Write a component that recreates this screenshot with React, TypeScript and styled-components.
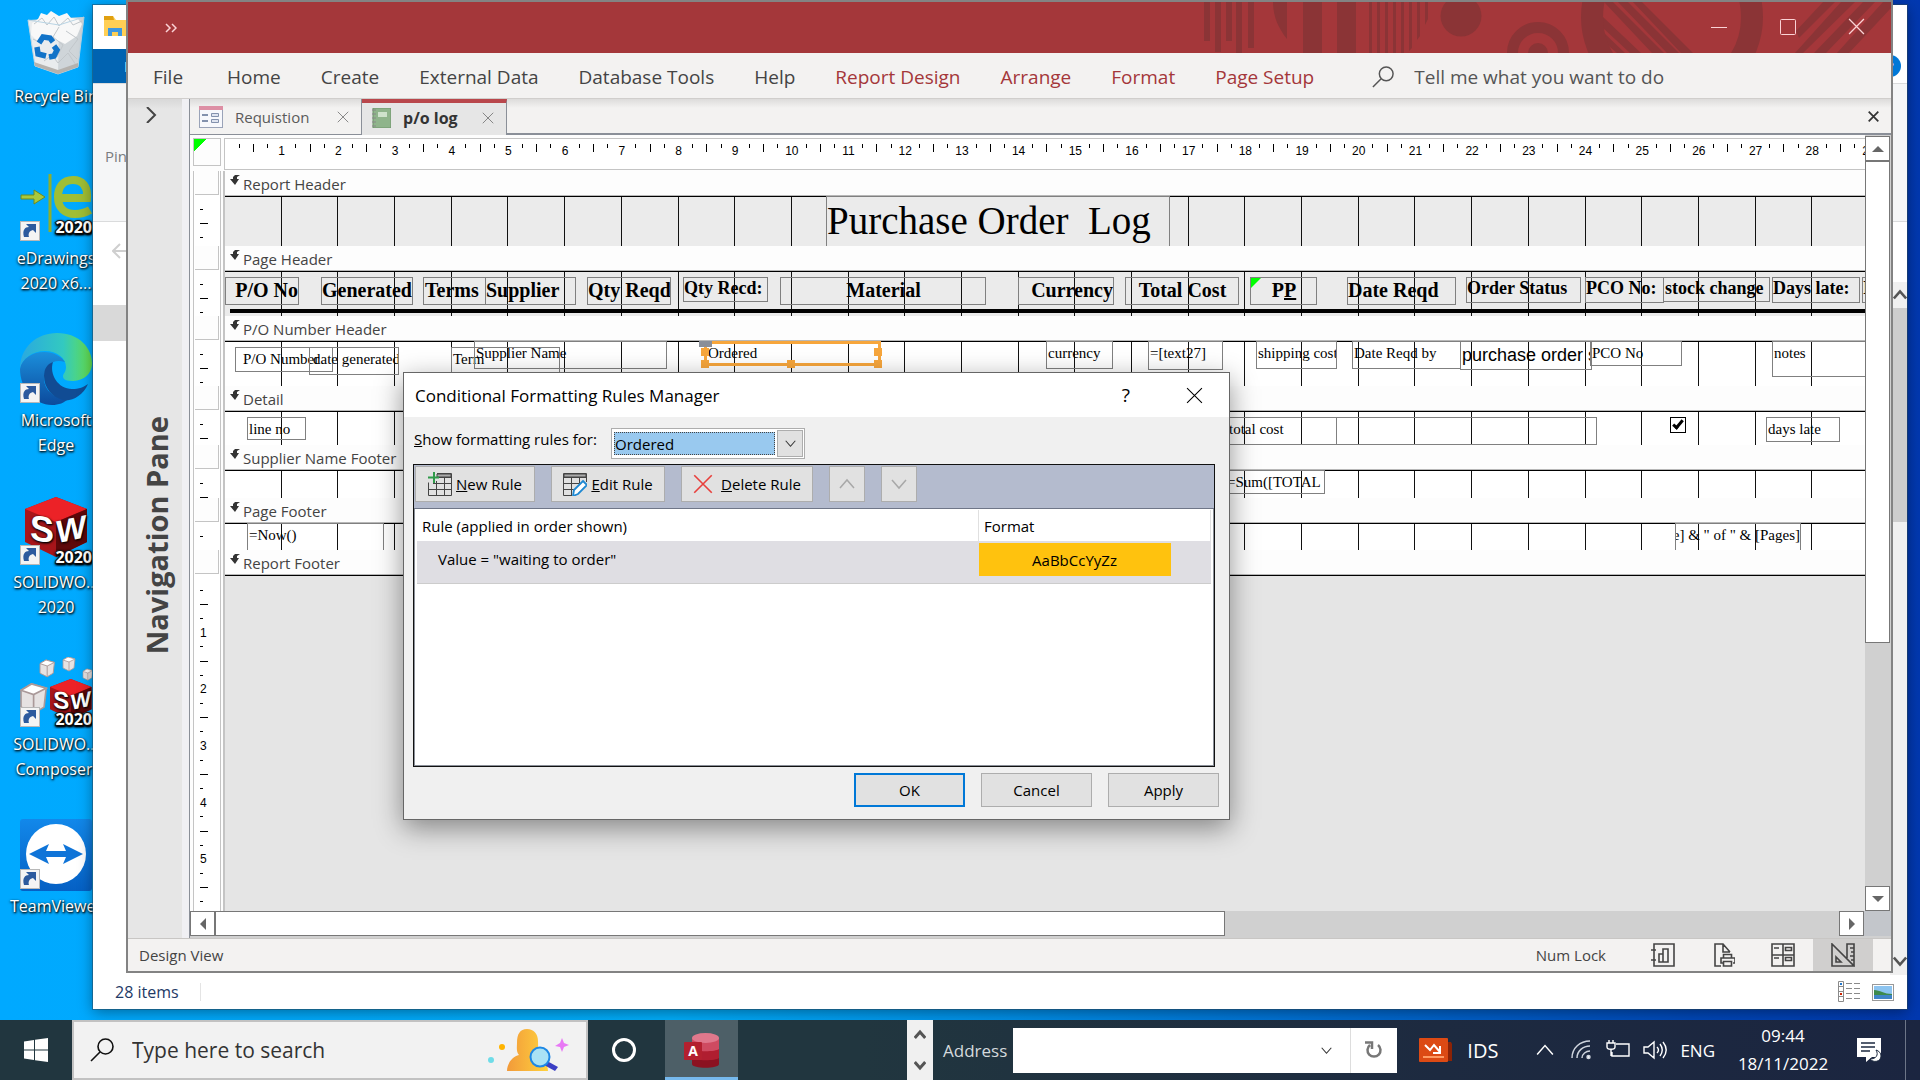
import React from 'react';
import styled, { createGlobalStyle, css } from 'styled-components';

const Global = createGlobalStyle`
  *, *::before, *::after { box-sizing: border-box; }
  body { margin: 0; overflow: hidden; font-family: "Open Sans", "Noto Sans", sans-serif; font-size: 15px; color: #222; }
  button, input, select { font: inherit; color: inherit; margin: 0; padding: 0; border-radius: 0; }
  button { background: none; border: 0; }
  svg { display: block; flex: none; }
  a { color: inherit; text-decoration: none; }
`;

/* ---------- desktop ---------- */
const Screen = styled.div`
  min-height: 100vh;
  display: flex;
  flex-direction: column;
`;
const Desktop = styled.main`
  flex: 1;
  position: relative;
  overflow: hidden;
  background: linear-gradient(90deg, #00a9ff 0%, #00adfa 35%, #0090e8 52%, #0070d4 68%, #0048b8 88%, #0238b0 100%);
`;
const Shortcuts = styled.nav`
  width: 112px;
  padding-top: 9px;
  display: flex;
  flex-direction: column;
`;
const Shortcut = styled.a`
  height: 162px;
  display: flex;
  flex-direction: column;
  align-items: center;
  gap: 3px;
  color: #fff;
  font-size: 16px;
  line-height: 25px;
  text-align: center;
  white-space: pre;
  text-shadow: 1px 1px 2px #000, 0 1px 3px rgba(0, 0, 0, 0.8);
`;

/* ---------- file explorer ---------- */
const Explorer = styled.section`
  position: absolute;
  inset: 5px 13px 11px 93px;
  background: #fff;
  display: flex;
  flex-direction: column;
  box-shadow: 0 0 0 1px rgba(40, 70, 90, 0.5), 0 3px 14px rgba(0, 0, 0, 0.4);
`;
const ExTitle = styled.div`
  height: 44px;
  padding: 11px 11px;
`;
const ExTabs = styled.div`
  height: 34px;
  display: flex;
  justify-content: space-between;
  align-items: center;
`;
const ExFile = styled.button`
  width: 90px;
  height: 34px;
  padding-left: 31px;
  background: #0063b1;
  color: #fff;
  text-align: left;
`;
const HelpDot = styled.button`
  width: 22px;
  height: 22px;
  margin: 0 6px 0 0;
  border-radius: 50%;
  background: #0078d7;
  color: #fff;
  font-weight: 700;
  line-height: 20px;
`;
const ExRibbon = styled.div`
  height: 139px;
  padding: 62px 0 0 12px;
  border: solid #dadbdc;
  border-width: 1px 0;
  background: #f5f6f7;
  color: #7a7d80;
`;
const ExAddress = styled.div`
  height: 60px;
  padding: 21px 12px 0 19px;
  display: flex;
  justify-content: space-between;
`;
const ExMain = styled.div`
  flex: 1;
  display: flex;
  justify-content: space-between;
`;
const ExTree = styled.div`
  width: 60px;
  padding-top: 23px;
`;
const ExSelected = styled.div`
  height: 36px;
  background: #d9d9d9;
`;
const ExScroll = styled.div`
  width: 17px;
  padding: 6px 0 7px;
  background: #f0f0f0;
  display: flex;
  flex-direction: column;
  align-items: flex-end;
  gap: 6px;
`;
const ExThumb = styled.div`
  width: 15px;
  height: 214px;
  background: #cdcdcd;
`;
const ExSpacer = styled.div`
  flex: 1;
`;
const ExFooter = styled.footer`
  height: 34px;
  padding: 0 13px 0 22px;
  display: flex;
  align-items: center;
  gap: 12px;
  font-size: 16px;
  color: #1e3a66;
`;
const ExCount = styled.span`
  border-right: 1px solid #e4e4e4;
  line-height: 18px;
  flex: 1;
  max-width: 86px;
  white-space: nowrap;
`;

/* ---------- access window ---------- */
const Access = styled.section`
  position: absolute;
  inset: 0 27px 47px 126px;
  border: 2px solid #838383;
  background: #f3f2f1;
  display: flex;
  flex-direction: column;
`;
const TitleBar = styled.header`
  position: relative;
  height: 51px;
  flex: none;
  display: flex;
  align-items: center;
  justify-content: space-between;
  background: #a4373a;
  color: #fbd3d5;
`;
const TitleArt = styled.svg`
  position: absolute;
  right: 0;
  top: 0;
`;
const QuickAccess = styled.button`
  padding-left: 37px;
`;
const WindowButtons = styled.div`
  position: relative;
  display: flex;
  padding-bottom: 2px;
`;
const WindowButton = styled.button`
  width: 69px;
  height: 48px;
  display: grid;
  place-items: center;
`;
const RibbonTabs = styled.nav`
  height: 46px;
  flex: none;
  padding: 2px 0 0 25px;
  display: flex;
  align-items: center;
  gap: 40px;
  border-bottom: 1px solid #d0cecc;
  font-size: 19px;
  color: #444;
  white-space: nowrap;
`;
const RibbonTab = styled.button<{ $context?: boolean; $wide?: boolean }>`
  color: ${p => (p.$context ? '#a4373a' : '#444')};
  margin-right: ${p => (p.$wide ? '4px' : '0')};
`;
const TellMe = styled.label`
  display: flex;
  align-items: center;
  gap: 20px;
  padding-left: 18px;
`;
const TellInput = styled.input`
  width: 300px;
  border: 0;
  background: none;
  &::placeholder { color: #555; opacity: 1; }
`;
const Work = styled.div`
  flex: 1;
  min-height: 0;
  display: flex;
`;
const NavPane = styled.aside`
  width: 62px;
  border-right: 1px solid #8a8f98;
  box-shadow: inset -7px 0 #f0f0f4;
  background: linear-gradient(#d8d8d8, #e6e6e6 10px);
  display: flex;
  flex-direction: column;
  align-items: center;
  padding: 8px 15px 0 0;
`;
const NavTitle = styled.h2`
  margin: 293px 0 0 12px;
  writing-mode: vertical-rl;
  transform: rotate(180deg);
  font-size: 29px;
  line-height: 40px;
  font-weight: 700;
  color: #444;
  white-space: nowrap;
`;
const Doc = styled.div`
  flex: 1;
  min-width: 0;
  display: flex;
  flex-direction: column;
`;
const DocTabs = styled.div`
  height: 36px;
  flex: none;
  display: flex;
  background: linear-gradient(#dddcdb, #f3f2f1 9px);
`;
const DocTab = styled.div<{ $active?: boolean }>`
  display: flex;
  align-items: center;
  gap: 12px;
  width: ${p => (p.$active ? '145px' : '172px')};
  padding: 0 12px 0 9px;
  border: solid #8a8f98;
  border-width: 0 1px 1px 0;
  white-space: nowrap;
  color: #5a5a5a;
  ${p => p.$active && css`
    padding-bottom: 3px;
    background: #e6e6e6;
    border-width: 4px 1px 0 0;
    border-top-color: #b9474c;
    color: #333;
    font-size: 16px;
    font-weight: 700;
  `}
  & > span { flex: 1; }
`;
const DocTabRest = styled.div`
  flex: 1;
  display: flex;
  justify-content: flex-end;
  align-items: center;
  padding-right: 12px;
  border-bottom: 2px solid #8a8f98;
`;
const DocMain = styled.div`
  flex: 1;
  min-height: 0;
  display: flex;
  background: #fdfdfd;
`;
const Design = styled.div`
  flex: 1;
  min-width: 0;
  display: flex;
  flex-direction: column;
  overflow: hidden;
`;
const RulerRow = styled.div`
  height: 36px;
  flex: none;
  display: grid;
  grid-template-columns: 28px 1fr;
  column-gap: 3px;
  padding: 3px 0 0 3px;
`;
const Corner = styled.div`
  height: 28px;
  border: 1px solid #c4c4c4;
  background: linear-gradient(135deg, #0f0 0 9px, #fdfdfd 9px);
`;
const HRuler = styled.div`
  height: 32px;
  display: flex;
  overflow: hidden;
  border: solid #c4c4c4;
  border-width: 1px 0 1px 1px;
  background: #fff;
  padding: 5px 0 0 0.1875cm;
  font: 12px/14px "Liberation Sans", sans-serif;
  color: #000;
`;
const HSlot = styled.span<{ $kind: number }>`
  flex: 0 0 0.375cm;
  display: flex;
  justify-content: center;
  &::before {
    content: "";
    display: ${p => (p.$kind === 0 ? 'none' : 'block')};
    width: 1px;
    height: ${p => (p.$kind === 2 ? '8px' : '4px')};
    background: #000;
  }
`;
const BandRow = styled.div<{ $fill?: boolean }>`
  display: grid;
  grid-template-columns: 28px 1fr;
  column-gap: 2px;
  padding-left: 3px;
  flex: ${p => (p.$fill ? '1' : 'none')};
  min-height: 0;
  overflow: hidden;
`;
const VRuler = styled.div`
  display: flex;
  flex-direction: column;
  border: solid #c4c4c4;
  border-width: 0 1px;
  background: #fff;
  overflow: hidden;
  min-height: 0;
`;
const VHead = styled.div`
  height: 24px;
  flex: none;
  margin: 0 1px;
  border: solid #c4c4c4;
  border-width: 0 1px 1px 0;
  background: #fdfdfd;
`;
const VTicks = styled.div`
  flex: 1 1 0;
  min-height: 0;
  overflow: hidden;
  padding: 0.1875cm 0 0 6px;
  font: 12px/14px "Liberation Sans", sans-serif;
  color: #000;
`;
const VSlot = styled.div<{ $kind: number }>`
  height: 0.375cm;
  display: flex;
  align-items: center;
  &::before {
    content: "";
    display: ${p => (p.$kind === 0 ? 'none' : 'block')};
    width: ${p => (p.$kind === 2 ? '8px' : '3px')};
    height: 1px;
    background: #000;
  }
`;
const Sheet = styled.div`
  min-width: 0;
  border-left: 2px solid #c4c4c4;
`;
const BandBar = styled.div`
  height: 26px;
  padding: 0 0 0 5px;
  display: flex;
  gap: 3px;
  border-bottom: 1px solid #000;
  box-shadow: inset 0 -1px #b8b8b8;
  background: #fdfdfd;
  line-height: 26px;
  color: #444;
  white-space: nowrap;
  & > svg { margin-top: 4px; }
`;
const BandBody = styled.div<{ $h: number; $tint?: boolean }>`
  position: relative;
  height: ${p => p.$h}px;
  background: ${p => (p.$tint ? '#ebebeb' : '#fff')};
`;
const Grid = styled.div`
  height: 100%;
  display: flex;
  overflow: hidden;
  & > i { flex: 0 0 1.5cm; border-right: 1px solid #111; }
`;
const Rule = styled.div`
  position: absolute;
  left: 5px;
  right: 0;
  bottom: 3px;
  height: 4px;
  background: #000;
`;
interface Box { x: number; y: number; w: number; h: number; t?: React.ReactNode; a?: string; k?: 'head' | 'sub' | 'title' | 'sans'; pad?: number; solid?: boolean }
const fonts = {
  head: css`font: 700 20px/25px "Liberation Serif", serif;`,
  sub: css`font: 700 18px/20px "Liberation Serif", serif;`,
  title: css`font: 39px/48px "Liberation Serif", serif;`,
  sans: css`font: 18px/26px "Liberation Sans", sans-serif;`,
  cell: css`font: 15px/22px "Liberation Serif", serif;`,
};
const Control = styled.div<{ $b: Box }>`
  position: absolute;
  left: ${p => p.$b.x - 225}px;
  top: ${p => p.$b.y}px;
  width: ${p => p.$b.w}px;
  height: ${p => p.$b.h}px;
  padding-left: ${p => p.$b.pad ?? 1}px;
  border: 1px solid #808080;
  display: flex;
  justify-content: ${p => p.$b.a ?? 'flex-start'};
  white-space: pre;
  overflow: hidden;
  color: #000;
  background: ${p => (p.$b.solid ? '#ebebeb' : 'transparent')};
  ${p => fonts[p.$b.k ?? 'cell']}
`;
const Flag = styled.i`
  position: absolute;
  left: 0;
  top: 0;
  border: solid transparent;
  border-width: 0 10px 10px 0;
  border-top: 10px solid #0f0;
  height: 0;
`;
const Selected = styled.div`
  position: absolute;
  left: 479px;
  top: -1px;
  width: 177px;
  height: 25px;
  padding-left: 1px;
  border: 3px solid #f7a63c;
  font: 15px/18px "Liberation Serif", serif;
  color: #000;
`;
const Handle = styled.i<{ $x: number; $y: number; $move?: boolean }>`
  position: absolute;
  left: ${p => p.$x}px;
  top: ${p => p.$y}px;
  width: ${p => (p.$move ? 13 : 8)}px;
  height: ${p => (p.$move ? 6 : 8)}px;
  background: ${p => (p.$move ? '#8a8f98' : '#f7a63c')};
`;
const Tick = styled.input`
  position: absolute;
  left: 1445px;
  top: 5px;
  width: 16px;
  height: 16px;
  appearance: none;
  border: 1px solid #000;
  background: #fff;
  &::after {
    content: "";
    position: absolute;
    left: 4px;
    top: 0;
    width: 6px;
    height: 11px;
    border: solid #000;
    border-width: 0 3px 3px 0;
    transform: rotate(40deg);
  }
`;
const Empty = styled.div`
  height: 100%;
  background: #e5e5e5;
`;
const VScroll = styled.div`
  width: 26px;
  display: flex;
  flex-direction: column;
  background: #d0d0d0;
  padding-top: 1px;
`;
const HScroll = styled.div`
  height: 27px;
  flex: none;
  display: flex;
  background: #d0d0d0;
  padding-bottom: 2px;
`;
const ScrollButton = styled.button`
  flex: none;
  width: 25px;
  height: 25px;
  display: grid;
  place-items: center;
  border: 1px solid #777;
  background: #fff;
`;
const VThumb = styled.div`
  flex: 0 0 482px;
  width: 25px;
  border: 1px solid #777;
  background: #fff;
`;
const HThumb = styled.div`
  flex: 0 0 1010px;
  border: 1px solid #777;
  background: #fff;
`;
const Track = styled.div`
  flex: 1;
`;
const ScrollCorner = styled.div`
  width: 27px;
  background: #c3c6cb;
`;
const StatusBar = styled.footer`
  height: 33px;
  flex: none;
  padding: 0 18px 0 11px;
  display: flex;
  align-items: center;
  border-top: 1px solid #c8c6c4;
  color: #444;
`;
const StatusText = styled.span<{ $grow?: boolean }>`
  flex: ${p => (p.$grow ? '1' : 'none')};
  margin-right: 27px;
`;
const ViewButton = styled.button<{ $on?: boolean }>`
  width: 60px;
  height: 32px;
  display: grid;
  place-items: center;
  background: ${p => (p.$on ? '#d0cfce' : 'transparent')};
`;

/* ---------- dialog ---------- */
const Dialog = styled.section`
  position: absolute;
  left: 403px;
  top: 372px;
  width: 827px;
  border: 1px solid #666;
  background: #f0f0f0;
  color: #000;
  box-shadow: 0 8px 26px rgba(0, 0, 0, 0.42);
`;
const DialogTitle = styled.header`
  height: 44px;
  padding: 0 26px 0 11px;
  display: flex;
  align-items: center;
  background: #fff;
  & > h1 { flex: 1; margin: 0; font-size: 17px; font-weight: 400; }
`;
const DialogButton = styled.button`
  margin-left: 56px;
  font-size: 19px;
  line-height: 24px;
`;
const DialogForm = styled.div`
  padding: 11px 14px 5px 10px;
  display: flex;
  gap: 14px;
`;
const FormLabel = styled.label`
  line-height: 22px;
  width: 183px;
  white-space: nowrap;
  &::first-letter { text-decoration: underline; }
`;
const Combo = styled.div`
  width: 194px;
  height: 31px;
  padding: 1px;
  display: flex;
  align-items: center;
  gap: 2px;
  border: 1px solid #adadad;
  background: #fff;
`;
const ComboSelect = styled.select`
  flex: 1;
  height: 23px;
  margin-left: 1px;
  appearance: none;
  border: 1px dotted #444;
  background: #99c9ef;
`;
const ComboArrow = styled.span`
  width: 26px;
  height: 27px;
  display: grid;
  place-items: center;
  border: 1px solid #adadad;
  background: #e1e1e1;
`;
const Frame = styled.div`
  height: 303px;
  margin: 0 14px 0 9px;
  border: 1px solid #111;
  box-shadow: inset 0 0 0 1px #8a8f98;
  background: #fff;
`;
const RuleBar = styled.div`
  height: 44px;
  padding: 1px;
  display: flex;
  gap: 16px;
  border-bottom: 1px solid #6f7688;
  background: #b4bbce;
`;
const RuleButton = styled.button<{ $w: number }>`
  width: ${p => p.$w}px;
  height: 36px;
  display: flex;
  align-items: center;
  justify-content: center;
  gap: 4px;
  border: 1px solid #adadad;
  background: #e1e1e1;
  white-space: nowrap;
  & > svg { margin-right: ${p => (p.$w > 130 ? '4px' : '0')}; }
`;
const Rules = styled.table`
  width: calc(100% - 6px);
  margin: 1px 3px 0;
  border-collapse: collapse;
  table-layout: fixed;
`;
const HeadCell = styled.th<{ $w?: number }>`
  width: ${p => (p.$w ? p.$w + 'px' : 'auto')};
  height: 31px;
  padding: 0 5px;
  border-right: 1px solid #e0e0e0;
  font-weight: 400;
  text-align: left;
`;
const RuleCell = styled.td<{ $rule?: boolean }>`
  height: 42px;
  padding: ${p => (p.$rule ? '0 0 6px 21px' : '2px 40px 7px 0')};
  border-bottom: 1px solid #ccc;
  background: #dfdee3;
`;
const Swatch = styled.div`
  height: 33px;
  line-height: 35px;
  text-align: center;
  background: #ffc20e;
`;
const Actions = styled.div`
  padding: 6px 10px 12px;
  display: flex;
  justify-content: flex-end;
  gap: 16px;
`;
const ActionButton = styled.button<{ $primary?: boolean }>`
  width: 111px;
  height: 34px;
  border: ${p => (p.$primary ? '2px solid #0078d7' : '1px solid #adadad')};
  background: #e1e1e1;
`;

/* ---------- taskbar ---------- */
const Taskbar = styled.footer`
  height: 60px;
  display: flex;
  align-items: center;
  background: linear-gradient(90deg, #21363f 0%, #21363f 45%, #1d2a40 75%, #1b2540 100%);
  color: #fff;
  white-space: nowrap;
`;
const StartButton = styled.button`
  width: 72px;
  height: 60px;
  display: grid;
  place-items: center;
`;
const SearchBox = styled.label`
  width: 516px;
  height: 60px;
  padding: 0 17px 0 16px;
  display: flex;
  align-items: center;
  gap: 18px;
  border: 2px solid #c2c2c2;
  background: #f2f2f2;
`;
const SearchInput = styled.input`
  flex: 1;
  min-width: 0;
  border: 0;
  background: none;
  font-size: 21px;
  &::placeholder { color: #333; opacity: 1; }
`;
const TaskButton = styled.button<{ $active?: boolean }>`
  width: ${p => (p.$active ? '73px' : '72px')};
  height: 60px;
  margin-right: 5px;
  display: grid;
  place-items: center;
  background: ${p => (p.$active ? '#4d5f67' : 'transparent')};
  box-shadow: ${p => (p.$active ? 'inset 0 -3px #76b9ed' : 'none')};
`;
const TaskSpace = styled.div`
  flex: 1;
`;
const Spinner = styled.div`
  width: 26px;
  height: 60px;
  display: flex;
  flex-direction: column;
  justify-content: space-around;
  align-items: center;
  background: #f0f0f0;
`;
const AddressLabel = styled.label`
  display: flex;
  align-items: center;
  gap: 6px;
  padding-left: 10px;
  font-size: 17px;
  color: #d5dadd;
`;
const AddressBox = styled.div`
  width: 384px;
  height: 45px;
  display: flex;
  align-items: center;
  background: #fff;
`;
const AddressInput = styled.input`
  flex: 1;
  min-width: 0;
  height: 45px;
  border: 0;
  background: #fff;
  color: #000;
`;
const AddressButton = styled.button<{ $line?: boolean }>`
  width: 47px;
  height: 45px;
  display: grid;
  place-items: center;
  border-left: ${p => (p.$line ? '1px solid #ddd' : '0')};
`;
const Tray = styled.div`
  display: flex;
  align-items: center;
  padding: 0 7px 0 22px;
`;
const TrayName = styled.span`
  margin: 0 38px 0 14px;
  font-size: 20px;
`;
const TrayIcons = styled.div`
  display: flex;
  gap: 13px;
  align-items: center;
  font-size: 17px;
  & > :first-child { margin-right: 4px; }
`;
const Clock = styled.time`
  width: 96px;
  margin: 0 26px 0 20px;
  font-size: 17px;
  line-height: 28px;
  text-align: center;
`;
const ShowDesktop = styled.button`
  width: 8px;
  height: 60px;
  margin-left: 23px;
  border-left: 1px solid #6d7688;
`;

/* ---------- icons ---------- */
const Chevron = ({ d, s = 16, c = '#555', w = 1 }: { d: 'up' | 'down' | 'right'; s?: number; c?: string; w?: number }) => (
  <svg width={s} height={s} viewBox="0 0 16 16" fill="none" stroke={c} strokeWidth={w}>
    <path d={d === 'up' ? 'M1 12 8 4l7 8' : d === 'down' ? 'M1 4l7 8 7-8' : 'M4 0l8 8-8 8'} />
  </svg>
);
const Triangle = ({ d }: { d: 'up' | 'down' | 'left' | 'right' }) => (
  <svg width="12" height="12" viewBox="0 0 12 12" fill="#666">
    <path d={{ up: 'M0 9 6 3l6 6z', down: 'M0 3h12L6 9z', left: 'M9 0v12L3 6z', right: 'M3 0v12l6-6z' }[d]} />
  </svg>
);
const Cross = ({ s, c, w = 1 }: { s: number; c: string; w?: number }) => (
  <svg width={s} height={s} viewBox="0 0 16 16" fill="none" stroke={c} strokeWidth={w}><path d="M1 1l14 14M15 1 1 15" /></svg>
);
const Lens = ({ s, c }: { s: number; c: string }) => (
  <svg width={s} height={s} viewBox="0 0 24 24" fill="none" stroke={c} strokeWidth="1.6"><circle cx="15.500" cy="8.500" r="7.500" /><path d="M10 14 1 23" /></svg>
);
const LinkBadge = () => (
  <g>
    <rect x="0.500" y="50.500" width="19" height="19" fill="#f4f4f4" stroke="#b8b8b8" />
    <path d="M4 66c-2-7 1-10 5-10l-3-3h10v9l-3-3c-4 1-5 4-4 7z" fill="#2c5a9e" />
  </g>
);
const Cube = ({ x, y, k }: { x: number; y: number; k: number }) => (
  <g transform={`translate(${x} ${y}) scale(${k})`}>
    <path d="M0 12 31 0l31 12v33L31 60 0 45z" fill="#a8151a" />
    <path d="M0 12 31 0l31 12-31 13z" fill="#ec2227" />
    <path d="M31 25 62 12v33L31 60z" fill="#5e080a" />
    <text x="5" y="47" fontSize="36" fontWeight="700" fill="#fff" transform="skewY(8) translate(0 -5)" fontFamily="Liberation Sans, sans-serif">S</text>
    <text x="31" y="47" fontSize="32" fontWeight="700" fill="#fff" transform="skewY(-12) translate(0 6)" fontFamily="Liberation Sans, sans-serif">W</text>
  </g>
);
const Year = ({ y = 68 }: { y?: number }) => (
  <text x="72" y={y} textAnchor="end" fontSize="16" fontWeight="700" fill="#fff" stroke="#222" strokeWidth="2" paintOrder="stroke" fontFamily="Open Sans, sans-serif">2020</text>
);
const White = ({ x, y, s }: { x: number; y: number; s: number }) => (
  <g transform={`translate(${x} ${y}) scale(${s})`} stroke="#a99" strokeWidth="0.800">
    <path d="M0 3 5 0l7 2-1 9-5 3-6-3z" fill="#e6e2e2" /><path d="M0 3l6 2 6-3-7-2z" fill="#fff" /><path d="M6 5v9" />
  </g>
);
const shortcuts = [
  {
    label: 'Recycle Bin', icon: (
      <svg width="72" height="72" viewBox="0 0 72 72">
        <path d="M8 11l56-3-6 50-20 7-23-8z" fill="#cfd5d9" />
        <path d="M8 11l31 5-1 49-23-8z" fill="#e9ecee" />
        <path d="M12 14l6-4 3-6 6 2 4-4 8 5 8-3 4 5 7 1 4 5-5 12-12 8-12-6-14 4-8-7z" fill="#f8f8f8" />
        <path d="M14 15l8-6 5 7 7-8 5 9 9-8 5 7 9-4M39 18l-6 10 10 8-6 12M46 22l12 8-9 12 8 8M13 30l8 4M24 52l8-6 6 8 10-10 8 12" fill="none" stroke="#c2c7cb" />
        <path d="M8 11l31 5 25-8M8 11l7 46 23 8 20-7 6-50" fill="none" stroke="#b9d4e4" />
        <path d="M14 53l24 8 20-7v4l-20 7-23-8z" fill="#b5b2ae" />
        <g fill="none" stroke="#1173c8" strokeWidth="5.500"><path d="M19 34l4-6 7 1 3 4" /><path d="M17 38l1 7 8 2" /><path d="M29 48l5-1 3-6-3-4" /></g>
      </svg>),
  },
  {
    label: 'eDrawings\n2020 x6...', icon: (
      <svg width="72" height="72" viewBox="0 0 72 72">
        <path d="M30 3v58" stroke="#8fae2e" strokeWidth="3" />
        <path d="M1 24h13v-5l11 7-11 7v-5H1z" fill="#a9c83c" stroke="#6f8b1e" />
        <path d="M38 27h29C68 15 62 9 53 9c-10 0-15 7-15 17 0 11 7 17 17 17 6 0 10-1 15-4" fill="none" stroke="#9fbe35" strokeWidth="8" />
        <Year y={62} />
        <LinkBadge />
      </svg>),
  },
  {
    label: 'Microsoft\nEdge', icon: (
      <svg width="72" height="72" viewBox="0 0 72 72">
        <defs>
          <linearGradient id="ea" x1="0" y1="0" x2="1" y2="0"><stop offset="0" stopColor="#2aa9e0" /><stop offset="0.600" stopColor="#33c9c0" /><stop offset="1" stopColor="#66e04a" /></linearGradient>
          <linearGradient id="eb" x1="0" y1="0" x2="0" y2="1"><stop offset="0" stopColor="#1b8fdc" /><stop offset="1" stopColor="#0c4a9c" /></linearGradient>
        </defs>
        <path d="M0 36C0 14 17 0 37 0c22 0 35 15 35 30 0 13-11 18-20 18-8 0-9-3-9-5 0-2 3-4 3-9 0-9-9-16-21-16C12 18 2 26 0 36z" fill="url(#ea)" />
        <path d="M0 36c2-11 13-17 24-17 10 0 18 5 21 10-12-4-21 4-21 16 0 14 13 22 25 20-5 5-10 7-17 7C14 72 0 55 0 36z" fill="url(#eb)" />
        <path d="M24 43c0-7 3-12 9-14-4 12 5 27 19 27 7 0 12-2 16-5-5 12-17 18-25 16-11-3-19-12-19-24z" fill="#114c94" />
        <LinkBadge />
      </svg>),
  },
  {
    label: 'SOLIDWO...\n2020', icon: (
      <svg width="72" height="72" viewBox="0 0 72 72"><Cube x={5} y={2} k={1} /><Year /><LinkBadge /></svg>),
  },
  {
    label: 'SOLIDWO...\nComposer ', icon: (
      <svg width="72" height="72" viewBox="0 0 72 72">
        <White x={20} y={3} s={1.2} /><White x={43} y={0} s={1} /><White x={63} y={12} s={0.8} /><White x={1} y={27} s={2.1} />
        <Cube x={30} y={22} k={0.67} /><Year /><LinkBadge />
      </svg>),
  },
  {
    label: 'TeamViewer', icon: (
      <svg width="72" height="72" viewBox="0 0 72 72">
        <defs><linearGradient id="tv" x1="0" y1="0" x2="0" y2="1"><stop offset="0" stopColor="#1288ea" /><stop offset="1" stopColor="#0560c4" /></linearGradient></defs>
        <rect width="72" height="72" rx="3" fill="url(#tv)" /><circle cx="36" cy="35" r="30" fill="#fff" />
        <path d="M9 35l20-10-3 7h20l-3-7 20 10-20 10 3-7H26l3 7z" fill="#0f74d8" />
        <LinkBadge />
      </svg>),
  },
];
const BandMark = () => (
  <svg width="10" height="10" viewBox="0 0 10 10" fill="#333"><path d="M10 0H5L3 2v2H0l5 6 4-6H7V2z" /></svg>
);

/* ---------- data ---------- */
interface BandData { name: string; h: number; tint?: boolean; boxes: Box[]; extra?: React.ReactNode }
const bands: BandData[] = [
  { name: 'Report Header', h: 49, tint: true, boxes: [{ x: 826, y: -1, w: 344, h: 51, t: 'Purchase Order  Log', k: 'title', pad: 0, solid: true }] },
  {
    name: 'Page Header', h: 44, tint: true, extra: <Rule />, boxes: [
      { x: 225, y: 5, w: 74, h: 28, t: 'P/O No', k: 'head', a: 'flex-end' },
      { x: 321, y: 5, w: 92, h: 28, t: 'Generated', k: 'head', pad: 0 },
      { x: 423, y: 5, w: 63, h: 28, t: 'Terms', k: 'head' },
      { x: 485, y: 5, w: 91, h: 28, t: 'Supplier', k: 'head', pad: 0 },
      { x: 587, y: 5, w: 84, h: 28, t: 'Qty Reqd', k: 'head', pad: 0 },
      { x: 683, y: 5, w: 85, h: 25, t: 'Qty Recd:', k: 'sub', pad: 0 },
      { x: 780, y: 5, w: 206, h: 28, t: 'Material', k: 'head', a: 'center' },
      { x: 1018, y: 5, w: 96, h: 28, t: 'Currency', k: 'head', a: 'flex-end' },
      { x: 1125, y: 5, w: 114, h: 28, t: 'Total Cost', k: 'head', a: 'center' },
      { x: 1250, y: 5, w: 67, h: 28, t: <><Flag />P<u>P</u></>, k: 'head', a: 'center' },
      { x: 1347, y: 5, w: 109, h: 28, t: 'Date Reqd', k: 'head', pad: 0 },
      { x: 1466, y: 5, w: 115, h: 26, t: 'Order Status', k: 'sub', pad: 0 },
      { x: 1585, y: 5, w: 79, h: 26, t: 'PCO No:', k: 'sub', pad: 0 },
      { x: 1663, y: 5, w: 107, h: 25, t: 'stock change', k: 'sub' },
      { x: 1772, y: 5, w: 88, h: 26, t: 'Days late:', k: 'sub', pad: 0 },
      { x: 1862, y: 5, w: 60, h: 26, t: 'I', k: 'sub', pad: 0 },
    ],
  },
  {
    name: 'P/O Number Header', h: 44, boxes: [
      { x: 235, y: 5, w: 98, h: 25, t: 'P/O Number', pad: 7 },
      { x: 309, y: 5, w: 90, h: 28, t: 'date generated', pad: 3 },
      { x: 451, y: 5, w: 109, h: 33, t: 'Term', pad: 1 },
      { x: 474, y: -1, w: 193, h: 28, t: 'Supplier Name' },
      { x: 1046, y: -1, w: 67, h: 28, t: 'currency' },
      { x: 1148, y: -1, w: 75, h: 29, t: '=[text27]' },
      { x: 1256, y: -1, w: 81, h: 28, t: 'shipping cost' },
      { x: 1352, y: -1, w: 109, h: 28, t: 'Date Reqd by' },
      { x: 1460, y: -1, w: 132, h: 29, t: 'purchase order s', k: 'sans' },
      { x: 1590, y: -1, w: 92, h: 25, t: 'PCO No' },
      { x: 1772, y: -1, w: 130, h: 36, t: 'notes' },
    ],
    extra: (
      <>
        <Selected>Ordered</Selected>
        <Handle $x={474} $y={-1} $move /><Handle $x={476} $y={6} /><Handle $x={649} $y={6} />
        <Handle $x={476} $y={18} /><Handle $x={562} $y={18} /><Handle $x={649} $y={18} />
      </>
    ),
  },
  {
    name: 'Detail', h: 33, boxes: [
      { x: 247, y: 5, w: 59, h: 23, t: 'line no' },
      { x: 1227, y: 5, w: 110, h: 28, t: 'total cost' },
      { x: 1336, y: 5, w: 261, h: 28 },
      { x: 1766, y: 5, w: 74, h: 25, t: 'days late' },
    ],
    extra: <Tick type="checkbox" defaultChecked aria-label="Stock change" />,
  },
  { name: 'Supplier Name Footer', h: 27, boxes: [{ x: 1225, y: -1, w: 100, h: 24, t: '=Sum([TOTAL ' }] },
  {
    name: 'Page Footer', h: 26, boxes: [
      { x: 247, y: -1, w: 137, h: 40, t: '=Now()' },
      { x: 1675, y: -1, w: 126, h: 40, t: 'e] & " of " & [Pages]', a: 'flex-end' },
    ],
  },
  { name: 'Report Footer', h: 0, boxes: [] },
];
const cells = Array.from({ length: 29 }, (_, i) => i);
const hslots = Array.from({ length: 118 }, (_, i) => i + 1);
const vslots = Array.from({ length: 26 }, (_, i) => i + 1);
const slotText = (n: number) => (n % 4 ? null : n / 4);
const Slots = ({ count }: { count: number }) => (
  <VTicks>{vslots.slice(0, count).map(n => <VSlot key={n} $kind={n % 4}>{slotText(n)}</VSlot>)}</VTicks>
);

const Band = ({ b }: { b: BandData }) => (
  <BandRow>
    <VRuler><VHead />{b.h > 0 && <Slots count={b.h > 40 ? 3 : b.h > 26 ? 2 : 1} />}</VRuler>
    <Sheet>
      <BandBar><BandMark />{b.name}</BandBar>
      <BandBody $h={b.h} $tint={b.tint}>
        <Grid>{cells.map(c => <i key={c} />)}</Grid>
        {b.boxes.map((x, i) => <Control key={i} $b={x}>{x.t}</Control>)}
        {b.extra}
      </BandBody>
    </Sheet>
  </BandRow>
);

const Art = () => (
  <TitleArt width="690" height="51" viewBox="0 0 690 51">
    <g fill="#8b3436">
      <path d="M3 0h6v39H3zM14 0h6v50h-6zM25 0h6v39h-6zM35 0h6v51h-6zM47 0h6v46h-6z" />
      <path d="M72 0h14v37C78 27 72 15 72 0zM102 0h19v51h-19zM136 0h19v51h-19z" />
      <path d="M168 0h3v51h-3zM176 0h3v51h-3zM184 0h3v51h-3zM192 0h3v51h-3zM200 0h3v51h-3zM208 0h3v46l-3 3zM216 0h3v34l-3 4zM224 0h3v17l-3 6z" />
      <circle cx="260" cy="14" r="20.500" />
      <circle cx="337" cy="51" r="10" />
      <path d="M402 15l38 36h-11l-27-25zM402 30l22 21h-8l-14-12zM403 0h9l51 51h-12zM417 0h10l51 51h-12zM432 0h9l51 51h-12z" />
      <path d="M640 0h14l-52 51h-8zM622 0h12l-36 36-3-7zM662 0h12l-49 51h-12zM682 0h8v6l-42 45h-12z" />
    </g>
    <g fill="none" stroke="#8b3436">
      <circle cx="337" cy="51" r="25.500" strokeWidth="11" />
      <circle cx="471" cy="15" r="80" strokeWidth="22" />
    </g>
  </TitleArt>
);

export default function App() {
  return (
    <Screen>
      <Global />
      <Desktop>
        <Shortcuts>
          {shortcuts.map((s, i) => <Shortcut key={i} href="#">{s.icon}<span>{s.label}</span></Shortcut>)}
        </Shortcuts>

        <Explorer>
          <ExTitle>
            <svg width="30" height="22" viewBox="0 0 30 22"><path d="M0 0h9l3 4h18v16H0z" fill="#ffcf55" /><path d="M0 0h9l1 4H0z" fill="#e0a010" /><path d="M4 20v-8h14v8h-4v-4H8v4z" fill="#3d97e0" /></svg>
          </ExTitle>
          <ExTabs><ExFile>File</ExFile><HelpDot>?</HelpDot></ExTabs>
          <ExRibbon>Pin</ExRibbon>
          <ExAddress>
            <svg width="18" height="16" viewBox="0 0 18 16" fill="none" stroke="#cfcfcf" strokeWidth="2"><path d="M8 1 1 8l7 7M1 8h17" /></svg>
          </ExAddress>
          <ExMain>
            <ExTree><ExSelected /></ExTree>
            <ExScroll>
              <Chevron d="up" s={14} w={3} />
              <ExThumb /><ExSpacer /><Chevron d="down" s={14} w={3} />
            </ExScroll>
          </ExMain>
          <ExFooter>
            <ExCount>28 items</ExCount><ExSpacer />
            <svg width="22" height="22" viewBox="0 0 22 22" fill="none" stroke="#8a8a8a"><path d="M.5.5h5v20h-5zM.5 5.500h5M.5 10.500h5M.5 15.500h5M8 2.500h6M16 2.500h6M8 7.500h6M16 7.500h6M8 12.500h6M16 12.500h6M8 17.500h6M16 17.500h6" /><path d="M2 3h2" stroke="#27c" strokeWidth="2" /><path d="M2 13h2" stroke="#c20" strokeWidth="2" /></svg>
            <svg width="22" height="17" viewBox="0 0 22 17"><rect x=".5" y=".5" width="21" height="16" fill="#fff" stroke="#999" /><path d="M2 2h18v13H2z" fill="#8cc4f0" /><path d="M2 6c6 0 10 4 18 4v2H2z" fill="#3e8a4c" /><path d="M2 11h18v4H2z" fill="#3f84c6" /></svg>
          </ExFooter>
        </Explorer>

        <Access>
          <TitleBar>
            <Art />
            <QuickAccess aria-label="More commands">
              <svg width="12" height="10" viewBox="0 0 12 10" fill="none" stroke="#fbd3d5" strokeWidth="1.500"><path d="M1 1l4 4-4 4M7 1l4 4-4 4" /></svg>
            </QuickAccess>
            <WindowButtons>
              <WindowButton aria-label="Minimize"><svg width="16" height="16" viewBox="0 0 16 16" stroke="#fbd3d5"><path d="M0 8.500h16" /></svg></WindowButton>
              <WindowButton aria-label="Maximize"><svg width="16" height="16" viewBox="0 0 16 16" fill="none" stroke="#fbd3d5"><rect x=".5" y=".5" width="15" height="15" rx="1" /></svg></WindowButton>
              <WindowButton aria-label="Close"><Cross s={17} c="#fbd3d5" w={1.2} /></WindowButton>
            </WindowButtons>
          </TitleBar>
          <RibbonTabs>
            <RibbonTab $wide>File</RibbonTab>
            <RibbonTab>Home</RibbonTab>
            <RibbonTab>Create</RibbonTab>
            <RibbonTab>External Data</RibbonTab>
            <RibbonTab>Database Tools</RibbonTab>
            <RibbonTab>Help</RibbonTab>
            <RibbonTab $context>Report Design</RibbonTab>
            <RibbonTab $context>Arrange</RibbonTab>
            <RibbonTab $context>Format</RibbonTab>
            <RibbonTab $context>Page Setup</RibbonTab>
            <TellMe><Lens s={22} c="#555" /><TellInput placeholder="Tell me what you want to do" /></TellMe>
          </RibbonTabs>
          <Work>
            <NavPane>
              <button aria-label="Expand"><Chevron d="right" c="#444" w={2} /></button>
              <NavTitle>Navigation Pane</NavTitle>
            </NavPane>
            <Doc>
              <DocTabs>
                <DocTab>
                  <svg width="24" height="22" viewBox="0 0 24 22"><rect x=".5" y=".5" width="23" height="21" fill="#f7f8fc" stroke="#9aa3b8" /><path d="M0 0h24v4H0z" fill="#dd8fa4" /><path d="M3 9h6M3 15h6" stroke="#8391ad" strokeWidth="2" /><path d="M12.500 7.500h7v3h-7zM12.500 13.500h7v3h-7z" fill="#dfe4f0" stroke="#8391ad" /></svg>
                  <span>Requistion</span><Cross s={12} c="#666" />
                </DocTab>
                <DocTab $active>
                  <svg width="20" height="20" viewBox="0 0 20 20"><rect x="2" y="0" width="18" height="20" fill="#8fb48b" stroke="#6f956b" /><path d="M7 4h9v5H7z" fill="#cfe2cc" /><path d="M1 2h4M1 6h4M1 10h4M1 14h4M1 18h4" stroke="#888" /></svg>
                  <span>p/o log</span><Cross s={12} c="#666" />
                </DocTab>
                <DocTabRest><button aria-label="Close tab"><Cross s={11} c="#333" w={2.5} /></button></DocTabRest>
              </DocTabs>
              <DocMain>
                <Design>
                  <RulerRow>
                    <Corner />
                    <HRuler>{hslots.map(n => <HSlot key={n} $kind={n % 4}>{slotText(n)}</HSlot>)}</HRuler>
                  </RulerRow>
                  {bands.map(b => <Band key={b.name} b={b} />)}
                  <BandRow $fill>
                    <VRuler><Slots count={24} /></VRuler>
                    <Sheet><Empty /></Sheet>
                  </BandRow>
                </Design>
                <VScroll>
                  <ScrollButton aria-label="Scroll up"><Triangle d="up" /></ScrollButton>
                  <VThumb /><Track />
                  <ScrollButton aria-label="Scroll down"><Triangle d="down" /></ScrollButton>
                </VScroll>
              </DocMain>
              <HScroll>
                <ScrollButton aria-label="Scroll left"><Triangle d="left" /></ScrollButton>
                <HThumb /><Track />
                <ScrollButton aria-label="Scroll right"><Triangle d="right" /></ScrollButton>
                <ScrollCorner />
              </HScroll>
            </Doc>
          </Work>
          <StatusBar>
            <StatusText $grow>Design View</StatusText>
            <StatusText>Num Lock</StatusText>
            <ViewButton aria-label="Report view"><svg width="24" height="24" viewBox="0 0 24 24" fill="none" stroke="#444" strokeWidth="1.600"><path d="M3 1h20v22H3zM0 7h5M0 17h5M8 11h4v8H8zM12 6h5v13h-5z" /></svg></ViewButton>
            <ViewButton aria-label="Print preview"><svg width="24" height="24" viewBox="0 0 24 24" fill="none" stroke="#444" strokeWidth="1.600"><path d="M10 23H4V1h8l7 8M12 1v8h7M12 20h-2v-5h14v5h-2M12.500 15v-3.500h8V15M12.500 18.500h8V23h-8z" /></svg></ViewButton>
            <ViewButton aria-label="Layout view"><svg width="24" height="24" viewBox="0 0 24 24" fill="none" stroke="#444" strokeWidth="1.600"><path d="M1 1h22v22H1zM12 1v22M1 12h22M3 5h5M3 15h5M14.500 4.500h6v3h-6zM14.500 14.500h6v3h-6z" /></svg></ViewButton>
            <ViewButton aria-label="Design view" $on><svg width="24" height="24" viewBox="0 0 24 24" fill="none" stroke="#444" strokeWidth="1.600"><path d="M1 1v22h22zM5 14v5h5zM16 15V1h7v22M19 5h4M20 9h3M19 13h4M20 17h3" /></svg></ViewButton>
          </StatusBar>
        </Access>

        <Dialog role="dialog" aria-label="Conditional Formatting Rules Manager">
          <DialogTitle>
            <h1>Conditional Formatting Rules Manager</h1>
            <DialogButton>?</DialogButton>
            <DialogButton aria-label="Close"><Cross s={17} c="#000" /></DialogButton>
          </DialogTitle>
          <DialogForm>
            <FormLabel htmlFor="field">Show formatting rules for:</FormLabel>
            <Combo>
              <ComboSelect id="field" defaultValue="Ordered"><option>Ordered</option></ComboSelect>
              <ComboArrow><Chevron d="down" s={11} c="#333" w={1.5} /></ComboArrow>
            </Combo>
          </DialogForm>
          <Frame>
            <RuleBar>
              <RuleButton $w={120}>
                <svg width="24" height="24" viewBox="0 0 24 24" fill="none" stroke="#444"><path d="M9 1.500h14.500v22H.5v-13M9 5.500h14M5 11.500h18M.5 17.500h23M8.500 9v14M16.500 5v18" /><path d="M9 2h14v3H9z" fill="#aaa" /><path d="M6 0v11M0 5.500h11" stroke="#2f9a4a" strokeWidth="2" /></svg>
                <span><u>N</u>ew Rule</span>
              </RuleButton>
              <RuleButton $w={114}>
                <svg width="24" height="24" viewBox="0 0 24 24" fill="none" stroke="#444"><path d="M9 23.500H.5v-22h23V10M.5 5.500h23M.5 11.500h18M.5 17.500h12M8.500 5v18M16.500 5v8" /><path d="M1 2h22v3H1z" fill="#aaa" /><path d="M20 9l4 4-9 9-5 2 1-6z" fill="#fff" stroke="#1e88d2" strokeWidth="1.800" /></svg>
                <span><u>E</u>dit Rule</span>
              </RuleButton>
              <RuleButton $w={132}><Cross s={20} c="#e8403c" w={1.3} /><span><u>D</u>elete Rule</span></RuleButton>
              <RuleButton $w={36} aria-label="Move up"><Chevron d="up" c="#a8a8a8" w={1.5} /></RuleButton>
              <RuleButton $w={36} aria-label="Move down"><Chevron d="down" c="#a8a8a8" w={1.5} /></RuleButton>
            </RuleBar>
            <Rules>
              <thead><tr><HeadCell>Rule (applied in order shown)</HeadCell><HeadCell $w={232}>Format</HeadCell></tr></thead>
              <tbody><tr><RuleCell $rule>Value = "waiting to order"</RuleCell><RuleCell><Swatch>AaBbCcYyZz</Swatch></RuleCell></tr></tbody>
            </Rules>
          </Frame>
          <Actions>
            <ActionButton $primary>OK</ActionButton>
            <ActionButton>Cancel</ActionButton>
            <ActionButton>Apply</ActionButton>
          </Actions>
        </Dialog>
      </Desktop>

      <Taskbar>
        <StartButton aria-label="Start"><svg width="24" height="24" viewBox="0 0 24 24" fill="#fff"><path d="M0 3.500 10 2v9.500H0zM11 1.800 24 0v11.500H11zM0 12.500h10V22L0 20.500zM11 12.500h13V24l-13-1.800z" /></svg></StartButton>
        <SearchBox>
          <Lens s={24} c="#111" />
          <SearchInput placeholder="Type here to search" />
          <svg width="82" height="44" viewBox="0 0 82 44">
            <defs><linearGradient id="pf" x1="0" y1="0" x2="1" y2="0"><stop offset="0" stopColor="#f29a3a" /><stop offset="1" stopColor="#ffd23d" /></linearGradient></defs>
            <path d="M20 43c0-8 6-15 12-16-3-3-2-8-2-12 0-9 3-14 10-14s11 5 11 12c0 6 1 10-2 14 6 2 12 8 12 16z" fill="url(#pf)" />
            <path d="M60 33l11 6-3 4-11-6z" fill="#3b3fc4" />
            <circle cx="53" cy="29" r="9.500" fill="#a9e2f5" stroke="#1e88e5" strokeWidth="2" />
            <circle cx="15" cy="19" r="3" fill="#ffb400" /><circle cx="4" cy="32" r="3" fill="#6fdce8" />
            <path d="M75 10l2 5 5 2-5 2-2 5-2-5-5-1 5-3z" fill="#e878f5" />
          </svg>
        </SearchBox>
        <TaskButton aria-label="Cortana"><svg width="26" height="26" viewBox="0 0 26 26" fill="none" stroke="#fff" strokeWidth="3"><circle cx="13" cy="13" r="10.500" /></svg></TaskButton>
        <TaskButton $active aria-label="Access">
          <svg width="36" height="36" viewBox="0 0 36 36">
            <path d="M8 6v26c0 5 27 5 27 0V6z" fill="#8b1221" /><path d="M8 6v20c3 3 24 3 27 0V6z" fill="#b01e30" /><path d="M8 6v11c3 3 24 3 27 0V6z" fill="#cf4b61" /><ellipse cx="21.500" cy="6" rx="13.500" ry="5" fill="#e0788c" />
            <rect x="0" y="10" width="18" height="18" rx="1" fill="#b3202f" />
            <text x="9" y="24" textAnchor="middle" fontSize="14" fontWeight="700" fill="#fff" fontFamily="Open Sans, sans-serif">A</text>
          </svg>
        </TaskButton>
        <TaskSpace />
        <Spinner><Chevron d="up" s={12} w={4} /><Chevron d="down" s={12} w={4} /></Spinner>
        <AddressLabel>
          Address
          <AddressBox>
            <AddressInput />
            <AddressButton aria-label="Show list"><Chevron d="down" s={11} c="#333" w={1.6} /></AddressButton>
            <AddressButton $line aria-label="Refresh"><svg width="18" height="18" viewBox="0 0 18 18" fill="none" stroke="#777" strokeWidth="2.500"><path d="M13 4a6.500 6.500 0 1 1-8 0M0 1.500h7V8" /></svg></AddressButton>
          </AddressBox>
        </AddressLabel>
        <Tray>
          <svg width="34" height="24" viewBox="0 0 34 24"><path d="M26 4h6l1 2v17h-7z" fill="#8c2306" /><rect width="29" height="24" rx="1" fill="#dc4a14" /><path d="M6 7l5 5 4-5 6 7M21 8v7h-7" fill="none" stroke="#fff" strokeWidth="2" /><path d="M4 19h21" stroke="#ff9a62" strokeWidth="2" /></svg>
          <TrayName>IDS</TrayName>
          <TrayIcons>
            <Chevron d="up" s={18} c="#fff" w={1.3} />
            <svg width="22" height="20" viewBox="0 0 22 20" fill="none" stroke="#cfd5de" strokeWidth="1.500"><path d="M1 18C1 8 9 1 19 1M6 18c0-7 6-12 13-12M11 18c0-4 4-7 8-7" /><circle cx="17.500" cy="17" r="1.500" fill="#fff" /></svg>
            <svg width="24" height="20" viewBox="0 0 24 20" fill="none" stroke="#fff" strokeWidth="1.400"><path d="M10 4h13v12H6v-4M1 3h8v4c0 3-8 3-8 0zM3 0v3M7 0v3M5 9v7" /></svg>
            <svg width="24" height="20" viewBox="0 0 24 20" fill="none" stroke="#fff" strokeWidth="1.400"><path d="M1 7h4l6-5v16l-6-5H1zM14 7c2 2 2 4 0 6M17 4c3 4 3 8 0 12M20 2c4 5 4 11 0 16" /></svg>
            <span>ENG</span>
          </TrayIcons>
          <Clock>09:44<br />18/11/2022</Clock>
          <svg width="25" height="25" viewBox="0 0 25 25"><path d="M0 0h24v19h-9l-6 5v-5H0z" fill="#fff" /><path d="M4 5h14M4 9h14M4 13h9" stroke="#1d2a40" strokeWidth="1.500" /><path d="M19 12c3 5 0 9-6 9 3 4 11 3 11-3 0-3-2-5-5-6z" fill="#fff" stroke="#1d2a40" /></svg>
          <ShowDesktop aria-label="Show desktop" />
        </Tray>
      </Taskbar>
    </Screen>
  );
}
